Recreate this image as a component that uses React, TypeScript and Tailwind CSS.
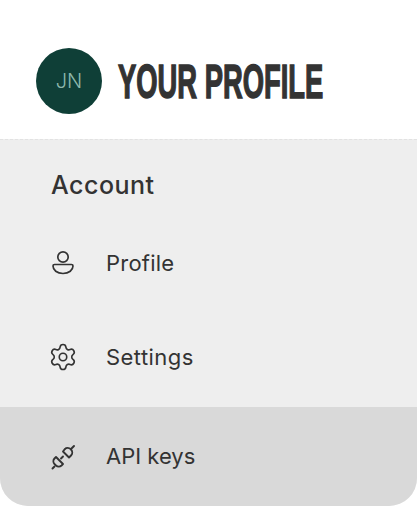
import { Settings } from "lucide-react";
import React from "react";

const ProfileIcon = () => (
  <svg width="26" height="26" viewBox="0 0 26 26" fill="none" stroke="#333" strokeWidth="1.7" strokeLinecap="round" strokeLinejoin="round">
    <circle cx="13" cy="7" r="5.200" />
    <path d="M4.500 14.500h17c1 0 1.500.6 1.500 1.500 0 4-4 7.500-10 7.500S3 20 3 16c0-.9.500-1.500 1.500-1.500z" />
  </svg>
);

const PlugIcon = () => (
  <svg width="26" height="26" viewBox="0 0 26 26" fill="none" stroke="#333" strokeWidth="1.9" strokeLinecap="round" strokeLinejoin="round">
    <path d="M2.500 24.500 4.500 22.500" />
    <path d="M6 13l7 7-1.500 1.500a4 4 0 0 1-5.500 0L4.500 20a4 4 0 0 1 0-5.500z" />
    <path d="M11 14.500l2-2" />
    <path d="M13 7.500l6 6 2-2a4.300 4.300 0 0 0 0-6l-.3-.3a4.300 4.300 0 0 0-6 0z" />
    <path d="M21 5l3-3" />
  </svg>
);

export default function App() {
  return (
    <div className="h-[506px] w-[417px] overflow-hidden bg-white font-['Inter',sans-serif] text-[#333]">
      <header className="flex h-[139px] items-center gap-[16px] pl-9 pt-[23px]">
        <div className="flex h-[66px] w-[66px] shrink-0 items-center justify-center rounded-full bg-[#0f3f37] text-[20px] font-light text-[#8db8ac]">
          JN
        </div>
        <h1 className="origin-left translate-y-[1px] scale-x-[0.57] whitespace-nowrap font-['Liberation_Sans',sans-serif] text-[48px] font-bold leading-none text-[#333] [-webkit-text-stroke:1.5px_#333]">
          YOUR PROFILE
        </h1>
      </header>
      <div className="h-[367px] overflow-hidden rounded-b-[28px] border-t border-dashed border-[#e2e2e2] bg-[#eeeeee]">
        <h2 className="pl-[51px] pt-[29px] text-[25px] font-medium leading-[32px] tracking-[0.02em]">Account</h2>
        <nav className="mt-[15px] flex flex-col">
          <div className="flex h-[94px] items-center gap-[30px] pl-[50px] text-[22px] tracking-[0.01em]">
            <ProfileIcon />
            Profile
          </div>
          <div className="flex h-[94px] items-center gap-[30px] pl-[50px] text-[22px] tracking-[0.02em]">
            <Settings size={30} strokeWidth={1.3} className="-mx-[2px]" />
            Settings
          </div>
          <div className="mt-[3px] flex h-[99px] items-center gap-[30px] bg-[#d9d9d9] pl-[50px] text-[22px]">
            <PlugIcon />
            API keys
          </div>
        </nav>
      </div>
    </div>
  );
}
